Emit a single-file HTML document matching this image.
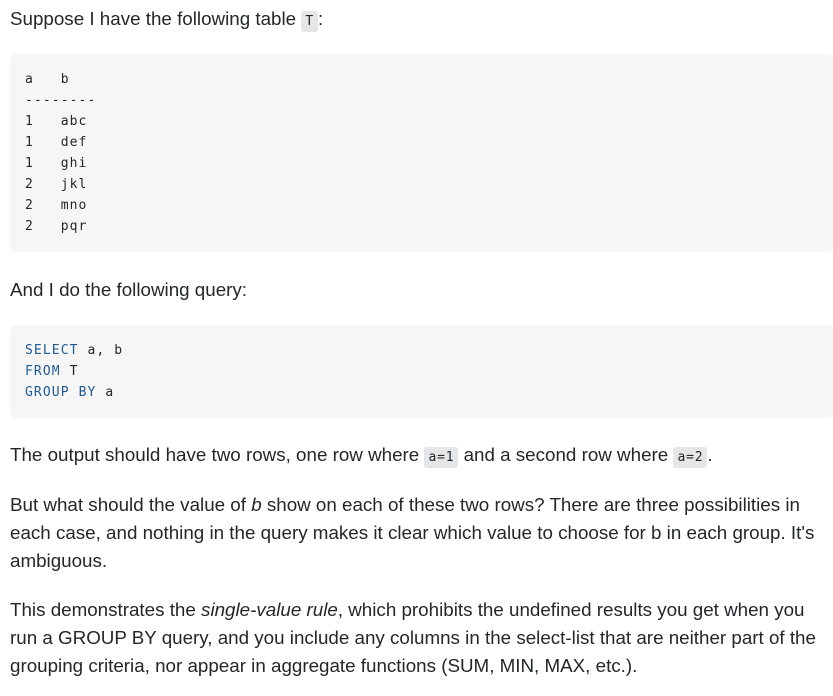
<!DOCTYPE html>
<html><head><style>
body{margin:0;background:#fff;width:833px;height:696px;overflow:hidden;font-family:"Liberation Sans",Arial,sans-serif;color:#242729}
.w{position:absolute;left:10px;top:0;width:823px}
p{margin:0;font-size:18.8px;line-height:28px;height:auto;white-space:nowrap}
pre{margin:0;background:#f6f6f6;border-radius:5px;padding:15px 15px;font-family:"DejaVu Sans Mono","Liberation Mono",monospace;font-size:13px;letter-spacing:1.1px;line-height:21px;color:#242729}
code.i{font-family:"DejaVu Sans Mono","Liberation Mono",monospace;font-size:13px;letter-spacing:0.8px;line-height:1;background:#e4e6e8;padding:3px 4px;border-radius:3px}
.k{color:#1f5a92}
</style></head><body><div class="w">
<p style="margin-top:5px">Suppose I have the following table <code class="i">T</code>:</p>
<pre style="margin-top:21px">a   b
--------
1   abc
1   def
1   ghi
2   jkl
2   mno
2   pqr</pre>
<p style="margin-top:24px">And I do the following query:</p>
<pre style="margin-top:21px"><span class="k">SELECT</span> a, b
<span class="k">FROM</span> T
<span class="k">GROUP</span> <span class="k">BY</span> a</pre>
<p style="margin-top:23px">The output should have two rows, one row where <code class="i">a=1</code> and a second row where <code class="i">a=2</code>.</p>
<p style="margin-top:22px">But what should the value of <i>b</i> show on each of these two rows? There are three possibilities in<br>each case, and nothing in the query makes it clear which value to choose for b in each group. It's<br>ambiguous.</p>
<p style="margin-top:21px">This demonstrates the <i>single-value rule</i>, which prohibits the undefined results you get when you<br>run a GROUP BY query, and you include any columns in the select-list that are neither part of the<br>grouping criteria, nor appear in aggregate functions (SUM, MIN, MAX, etc.).</p>
</div></body></html>
